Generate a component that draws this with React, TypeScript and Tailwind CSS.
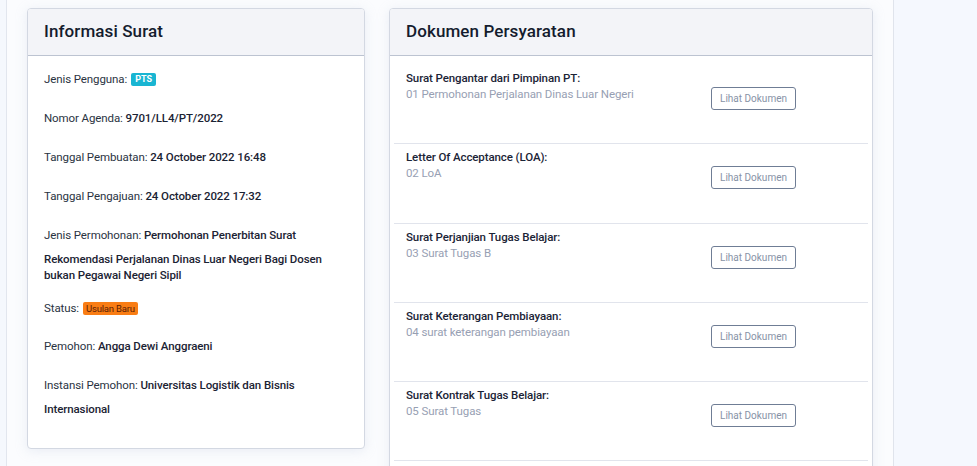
import React from 'react';

interface Dokumen {
  judul: string;
  file: string;
}

const dokumen: Dokumen[] = [
  { judul: 'Surat Pengantar dari Pimpinan PT:', file: '01 Permohonan Perjalanan Dinas Luar Negeri' },
  { judul: 'Letter Of Acceptance (LOA):', file: '02 LoA' },
  { judul: 'Surat Perjanjian Tugas Belajar:', file: '03 Surat Tugas B' },
  { judul: 'Surat Keterangan Pembiayaan:', file: '04 surat keterangan pembiayaan' },
  { judul: 'Surat Kontrak Tugas Belajar:', file: '05 Surat Tugas' },
];

function CardHeader({ title }: { title: string }) {
  return (
    <div className="h-[47px] bg-[#f3f4f8] border-b border-[#bcc3d1] rounded-t-[3px] px-4 flex items-center">
      <h2 className="text-[17px] font-medium text-[#141c2e] tracking-[0.1px]">{title}</h2>
    </div>
  );
}

export default function App() {
  return (
    <div
      className="flex h-[466px] w-[977px] overflow-hidden text-[11.5px] tracking-[-0.1px]"
      style={{ fontFamily: 'Roboto, "Liberation Sans", sans-serif' }}
    >
      <div className="w-[7px] shrink-0 bg-[#f5f8fd] border-r border-[#e2e6ee]" />

      {/* Konten utama */}
      <div className="w-[887px] shrink-0 bg-[#fbfcfe] border-r border-[#e0e4ec] flex items-start gap-[24px] pl-[20px] pt-[8px]">
        {/* Informasi Surat */}
        <div className="w-[338px] shrink-0 bg-white border border-[#d3d8e2] rounded-[4px] shadow-[0_2px_12px_rgba(180,190,215,0.25)]">
          <CardHeader title="Informasi Surat" />
          <div className="px-4 pt-[11px] pb-[12px] text-[#2a3342]">
            <p className="leading-[24px] mb-[15px] flex items-center">
              Jenis Pengguna:
              <span className="ml-[4px] bg-[#19b5d2] text-white text-[9px] font-bold leading-[13px] px-[4px] rounded-[2px] tracking-normal">
                PTS
              </span>
            </p>
            <p className="leading-[24px] mb-[15px]">
              Nomor Agenda: <b className="font-medium text-[#1b2333]">9701/LL4/PT/2022</b>
            </p>
            <p className="leading-[24px] mb-[15px]">
              Tanggal Pembuatan: <b className="font-medium text-[#1b2333]">24 October 2022 16:48</b>
            </p>
            <p className="leading-[24px] mb-[15px]">
              Tanggal Pengajuan: <b className="font-medium text-[#1b2333]">24 October 2022 17:32</b>
            </p>
            <p className="leading-[24px] whitespace-nowrap">
              Jenis Permohonan: <b className="font-medium text-[#1b2333]">Permohonan Penerbitan Surat</b>
            </p>
            <p className="leading-[16px] pt-[4px] mb-[13px] font-medium text-[#1b2333] whitespace-nowrap">
              Rekomendasi Perjalanan Dinas Luar Negeri Bagi Dosen
              <br />
              bukan Pegawai Negeri Sipil
            </p>
            <p className="leading-[24px] mb-[14px] flex items-center">
              Status:
              <span className="ml-[4px] bg-[#f97d14] text-[#5c2104] text-[9.5px] leading-[13px] px-[3px] rounded-[2px] tracking-[-0.2px]">
                Usulan Baru
              </span>
            </p>
            <p className="leading-[24px] mb-[15px]">
              Pemohon: <b className="font-medium text-[#1b2333]">Angga Dewi Anggraeni</b>
            </p>
            <p className="leading-[24px] mb-[15px] whitespace-nowrap">
              Instansi Pemohon: <b className="font-medium text-[#1b2333]">Universitas Logistik dan Bisnis</b>
              <br />
              <b className="font-medium text-[#1b2333]">Internasional</b>
            </p>
          </div>
        </div>

        {/* Dokumen Persyaratan */}
        <div className="w-[484px] shrink-0 bg-white border border-[#d3d8e2] rounded-[4px] shadow-[0_2px_12px_rgba(180,190,215,0.25)]">
          <CardHeader title="Dokumen Persyaratan" />
          <div className="pt-[9px] px-[4px] pb-[40px]">
            {dokumen.map((d) => (
              <div
                key={d.file}
                className="h-[79.25px] border-b border-[#e1e4ec] pl-[12px] pt-[5px] flex items-start"
              >
                <div className="w-[305px] shrink-0">
                  <p className="leading-[16px] font-medium text-[#1b2436]">{d.judul}</p>
                  <p className="leading-[16px] text-[#97a0b3]">{d.file}</p>
                </div>
                <button className="mt-[17px] w-[85px] h-[23px] border border-[#6f7d95] rounded-[3px] text-[10px] tracking-normal text-[#8792a6] bg-white">
                  Lihat Dokumen
                </button>
              </div>
            ))}
          </div>
        </div>
      </div>

      <div className="flex-1 bg-[#f5f8fe]" />
    </div>
  );
}
